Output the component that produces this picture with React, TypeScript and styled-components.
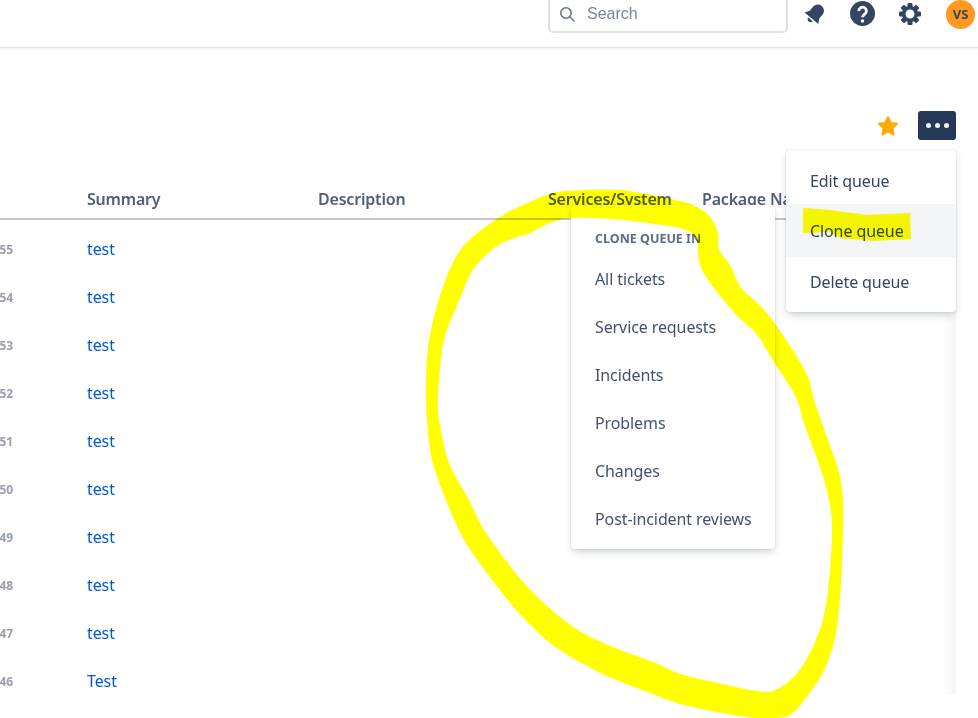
import styled, { createGlobalStyle } from 'styled-components'

const GlobalStyle = createGlobalStyle`
  html, body {
    margin: 0;
    height: 100%;
    overflow: hidden;
    background: #fff;
  }
  body {
    font-family: 'Noto Sans', 'Open Sans', sans-serif;
    font-size: 16px;
    letter-spacing: -0.1px;
  }
`

const rows = [
  { id: 55, summary: 'test' },
  { id: 54, summary: 'test' },
  { id: 53, summary: 'test' },
  { id: 52, summary: 'test' },
  { id: 51, summary: 'test' },
  { id: 50, summary: 'test' },
  { id: 49, summary: 'test' },
  { id: 48, summary: 'test' },
  { id: 47, summary: 'test' },
  { id: 46, summary: 'Test' },
]

const cloneTargets = ['All tickets', 'Service requests', 'Incidents', 'Problems', 'Changes', 'Post-incident reviews']

type Point = [number, number]

// the marker scribble, outer edge then inner edge
const outerEdge: Point[] = [
  [530, 203], [550, 195], [567, 192], [620, 191], [670, 200], [690, 205], [707, 215], [717, 233], [718, 250],
  [730, 267], [740, 288], [763, 310], [787, 343], [807, 377], [813, 400], [827, 440], [838, 473], [842, 500],
  [842, 533], [840, 583], [835, 633], [823, 670], [803, 700], [787, 715], [757, 717], [723, 712], [680, 703],
  [653, 693], [603, 673], [557, 647], [527, 620], [505, 595], [467, 543], [447, 500], [433, 460], [428, 420],
  [427, 380], [430, 340], [443, 290], [463, 248], [500, 218],
]

const innerEdge: Point[] = [
  [530, 232], [547, 223], [570, 217], [613, 218], [647, 222], [680, 227], [697, 238], [703, 270], [735, 312],
  [757, 333], [775, 362], [797, 397], [805, 423], [823, 473], [830, 500], [833, 527], [830, 580], [823, 623],
  [803, 667], [778, 690], [757, 692], [713, 683], [680, 675], [653, 663], [610, 647], [573, 628], [537, 598],
  [512, 570], [483, 530], [468, 500], [448, 463], [438, 420], [437, 393], [443, 340], [457, 303], [473, 268],
  [500, 243],
]

const cloneMark: Point[] = [
  [803, 208], [830, 210], [867, 215], [910, 213], [911, 239], [873, 241], [840, 238], [830, 232], [803, 233],
]

// catmull-rom through the traced points
const smoothLoop = (pts: Point[]) => {
  const n = pts.length
  let d = `M${pts[0][0]} ${pts[0][1]}`
  pts.forEach((p, i) => {
    const prev = pts[(i - 1 + n) % n]
    const next = pts[(i + 1) % n]
    const after = pts[(i + 2) % n]
    const c1 = [p[0] + (next[0] - prev[0]) / 6, p[1] + (next[1] - prev[1]) / 6]
    const c2 = [next[0] - (after[0] - p[0]) / 6, next[1] - (after[1] - p[1]) / 6]
    d += `C${c1[0]} ${c1[1]} ${c2[0]} ${c2[1]} ${next[0]} ${next[1]}`
  })
  return d + 'Z'
}

const straightLoop = (pts: Point[]) => 'M' + pts.map((p) => p.join(' ')).join('L') + 'Z'

const BellIcon = () => (
  <svg width="24" height="24" viewBox="0 0 24 24" fill="#344563">
    <g transform="rotate(40 12 12)">
      <path d="M12 1.5a6.2 6.2 0 0 0-6.2 6.2v5.1L3 17.5h18l-2.8-4.7V7.700A6.200 6.200 0 0 0 12 1.500z" />
      <path d="M9.200 19h5.600a2.800 2.800 0 0 1-5.600 0z" />
    </g>
  </svg>
)

const HelpIcon = () => (
  <svg width="25" height="25" viewBox="0 0 25 25">
    <circle cx="12.500" cy="12.500" r="12.500" fill="#344563" />
    <path d="M8.800 10a3.800 3.800 0 1 1 5.800 3.200c-1.300.8-2.100 1.400-2.100 3" fill="none" stroke="#fff" strokeWidth="2.800" />
    <circle cx="12.500" cy="20" r="1.700" fill="#fff" />
  </svg>
)

const GearIcon = () => (
  <svg width="22" height="22" viewBox="0 0 22 22" fill="#344563">
    {[0, 45, 90, 135, 180, 225, 270, 315].map((angle) => (
      <rect key={angle} x="8.500" y="0" width="5" height="5" rx="1" transform={`rotate(${angle} 11 11)`} />
    ))}
    <circle cx="11" cy="11" r="6.300" fill="none" stroke="#344563" strokeWidth="3.600" />
  </svg>
)

const SearchGlyph = () => (
  <svg width="16" height="16" viewBox="0 0 16 16" fill="none" stroke="#6b778c" strokeWidth="1.600">
    <circle cx="7" cy="7" r="5.200" />
    <path d="M11 11l4 4" strokeLinecap="round" />
  </svg>
)

const StarIcon = () => (
  <svg width="22" height="21" viewBox="0 0 22 21" fill="#ffab00" stroke="#ffab00" strokeWidth="2" strokeLinejoin="round">
    <path d="M11 2l2.800 5.900 6.200.8-4.500 4.400 1.100 6.300L11 16.400l-5.600 3 1.100-6.300L2 8.700l6.200-.8z" />
  </svg>
)

const App = () => {
  return (
    <Page>
      <GlobalStyle />
      <TopBar>
        <SearchBox>
          <SearchGlyph />
          <SearchLabel>Search</SearchLabel>
        </SearchBox>
        <BarIcons>
          <BarIcon $width={24}><BellIcon /></BarIcon>
          <BarIcon $width={25}><HelpIcon /></BarIcon>
          <BarIcon $width={24}><GearIcon /></BarIcon>
          <Avatar>VS</Avatar>
        </BarIcons>
      </TopBar>
      <Main>
        <Actions>
          <StarIcon />
          <MoreButton>
            <Dot />
            <Dot />
            <Dot />
          </MoreButton>
        </Actions>
        <Table>
          <HeadRow>
            <span />
            <span>Summary</span>
            <span>Description</span>
            <span>Services/System</span>
            <span>Package Name</span>
          </HeadRow>
          {rows.map((row) => (
            <Row key={row.id}>
              <IssueId>{row.id}</IssueId>
              <IssueLink>{row.summary}</IssueLink>
            </Row>
          ))}
        </Table>
        <ScrollShade />
      </Main>

      <QueueMenu>
        <QueueItem>Edit queue</QueueItem>
        <QueueItem $active>Clone queue</QueueItem>
        <QueueItem>Delete queue</QueueItem>
      </QueueMenu>

      <CloneMenu>
        <CloneHeading>CLONE QUEUE IN</CloneHeading>
        {cloneTargets.map((name) => (
          <CloneItem key={name}>{name}</CloneItem>
        ))}
      </CloneMenu>

      <Scribble width="978" height="718" viewBox="0 0 978 718" fill="#ffff00" fillRule="evenodd">
        <path d={smoothLoop(outerEdge) + smoothLoop(innerEdge)} stroke="#ffff00" strokeWidth="2" />
        <path d={straightLoop(cloneMark)} />
      </Scribble>
    </Page>
  )
}

export default App

const Page = styled.div`
  position: relative;
  width: 978px;
  height: 718px;
  overflow: hidden;
  color: #42526e;
`

const TopBar = styled.header`
  display: flex;
  justify-content: flex-end;
  align-items: flex-start;
  height: 48px;
  box-sizing: border-box;
  border-bottom: 1px solid #e4e5ea;
  box-shadow: 0 1px 2px rgba(9, 30, 66, 0.08);
`

const SearchBox = styled.div`
  display: flex;
  align-items: center;
  gap: 12px;
  width: 240px;
  height: 39px;
  margin-top: -6px;
  padding: 0 0 0 9px;
  box-sizing: border-box;
  border: 2px solid #dfe1e6;
  border-radius: 5px;
`

const SearchLabel = styled.span`
  font-family: 'Liberation Sans', Arial, sans-serif;
  font-size: 16px;
  letter-spacing: 0;
  color: #7a869a;
`

const BarIcons = styled.div`
  display: flex;
  align-items: center;
  width: 190px;
  height: 28px;
  padding-left: 15px;
  box-sizing: border-box;
  gap: 23px;
`

const BarIcon = styled.div<{ $width: number }>`
  display: flex;
  width: ${({ $width }) => $width}px;
  height: 25px;
  margin-top: -1px;
  align-items: center;
  justify-content: center;
`

const Avatar = styled.div`
  display: flex;
  align-items: center;
  justify-content: center;
  flex: none;
  width: 29px;
  height: 29px;
  margin-left: 1px;
  border-radius: 50%;
  background: #ff991f;
  color: #344563;
  font-size: 13px;
  font-weight: 700;
  letter-spacing: 0;
`

const Main = styled.main`
  position: relative;
  height: 647px;
  overflow: hidden;
`

const Actions = styled.div`
  display: flex;
  justify-content: flex-end;
  align-items: center;
  gap: 19px;
  height: 29px;
  padding: 63px 22px 0 0;
`

const MoreButton = styled.button`
  display: flex;
  align-items: center;
  justify-content: center;
  gap: 4px;
  width: 38px;
  height: 29px;
  padding: 0;
  border: 0;
  border-radius: 3px;
  background: #253858;
`

const Dot = styled.span`
  width: 5px;
  height: 5px;
  border-radius: 50%;
  background: #f4f5f7;
`

const Table = styled.section`
  width: 956px;
  margin-top: 40px;
`

const HeadRow = styled.div`
  display: grid;
  grid-template-columns: 87px 231px 230px 154px 1fr;
  align-items: center;
  height: 38px;
  border-bottom: 2px solid #c1c7d0;
  margin-bottom: 5px;
  font-weight: 600;
  letter-spacing: -0.2px;
  color: #505f79;
  white-space: nowrap;
`

const Row = styled.div`
  display: grid;
  grid-template-columns: 87px 1fr;
  align-items: center;
  height: 48px;
`

const IssueId = styled.span`
  justify-self: end;
  padding-right: 74px;
  font-size: 12px;
  font-weight: 700;
  color: #97a0af;
`

const IssueLink = styled.a`
  color: #0057d8;
`

const ScrollShade = styled.div`
  position: absolute;
  top: 172px;
  right: 22px;
  bottom: 0;
  width: 14px;
  background: linear-gradient(to right, rgba(244, 245, 247, 0), #f4f5f7);
`

const menuSurface = `
  position: absolute;
  box-sizing: border-box;
  background: #fff;
  border-radius: 3px;
  box-shadow: 0 4px 8px -2px rgba(9, 30, 66, 0.25), 0 0 1px rgba(9, 30, 66, 0.31);
`

const QueueMenu = styled.div`
  ${menuSurface}
  top: 150px;
  left: 786px;
  display: flex;
  flex-direction: column;
  width: 170px;
  height: 162px;
  padding: 4px 0;
`

const QueueItem = styled.div<{ $active?: boolean }>`
  display: flex;
  flex: none;
  align-items: center;
  box-sizing: border-box;
  height: ${({ $active }) => ($active ? 53 : 50)}px;
  padding-left: 24px;
  color: #344563;
  background: ${({ $active }) => ($active ? '#f4f5f7' : 'transparent')};

  &:first-child {
    padding-top: 3px;
  }
`

const CloneMenu = styled.div`
  ${menuSurface}
  top: 205px;
  left: 571px;
  width: 204px;
  height: 344px;
`

const CloneHeading = styled.div`
  display: flex;
  align-items: center;
  height: 50px;
  box-sizing: border-box;
  padding: 16px 24px 0;
  font-size: 12.500px;
  font-weight: 700;
  letter-spacing: 0;
  color: #5e6c84;
`

const CloneItem = styled.div`
  display: flex;
  align-items: center;
  height: 48px;
  padding-left: 24px;
  color: #42526e;
`

const Scribble = styled.svg`
  position: absolute;
  top: 0;
  left: 0;
  mix-blend-mode: multiply;
  pointer-events: none;
`
